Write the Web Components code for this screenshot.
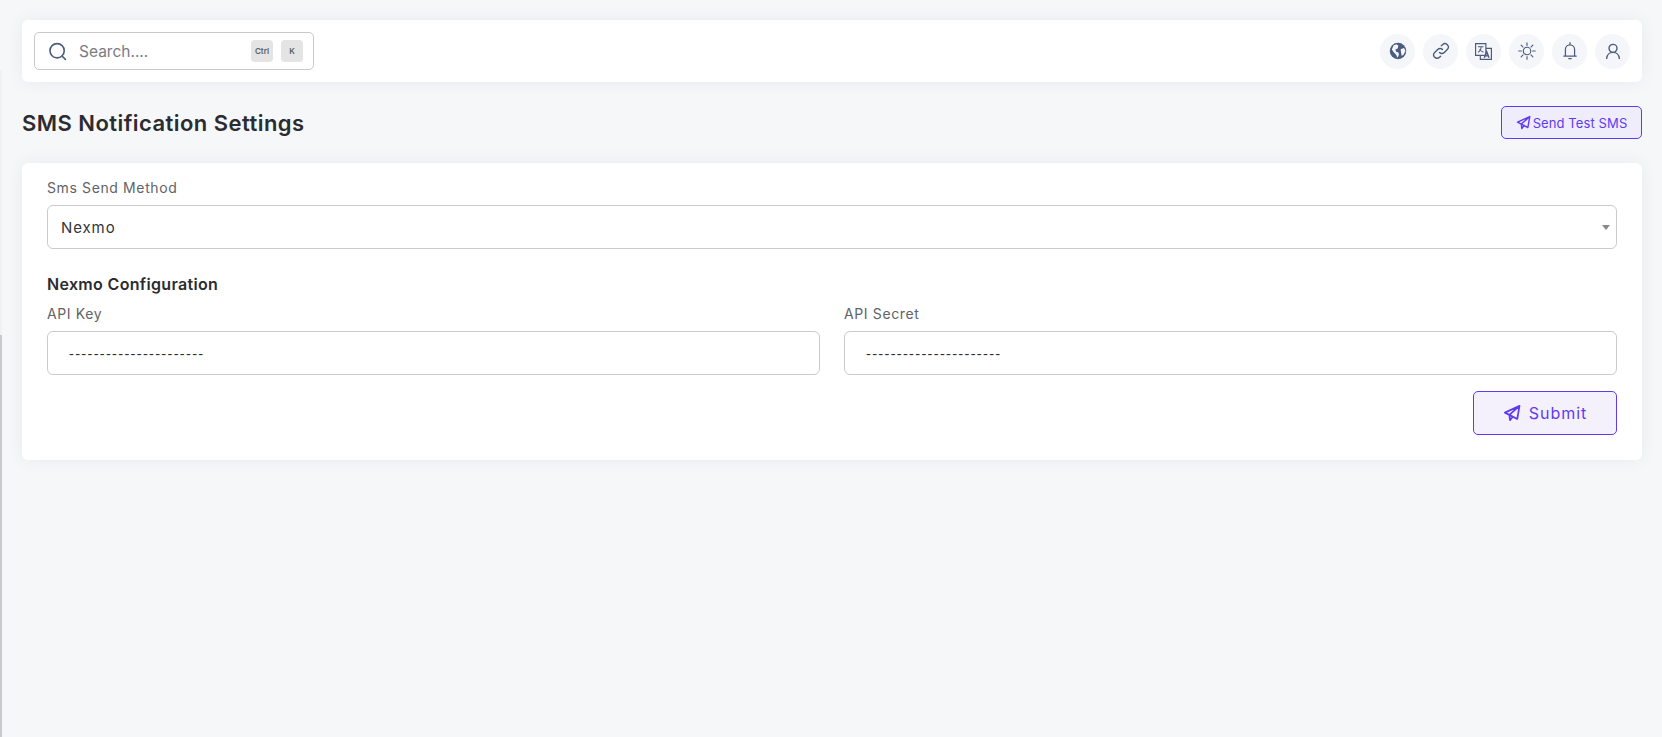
<!DOCTYPE html>
<html lang="en"><head><meta charset="utf-8"><title>SMS Notification Settings</title>
<style>
html,body{margin:0;height:100%}
body{background:#f6f7f9;font-family:Inter,"Open Sans",sans-serif;color:#2b2c30;overflow:hidden}
.edge-a{position:absolute;left:0;top:70px;width:2px;height:265px;background:#f0f1f3}
.edge-b{position:absolute;left:0;top:335px;width:2px;bottom:0;background:#c9cacd}
</style></head>
<body>
<div class="edge-a"></div><div class="edge-b"></div>
<sms-page>
  <top-bar></top-bar>
  <page-head title-text="SMS Notification Settings"><action-btn small>Send Test SMS</action-btn></page-head>
  <sms-card>
    <form-field label="Sms Send Method"><select-box>Nexmo</select-box></form-field>
    <h3-title>Nexmo Configuration</h3-title>
    <field-row>
      <form-field label="API Key"><text-box>----------------------</text-box></form-field>
      <form-field label="API Secret"><text-box>----------------------</text-box></form-field>
    </field-row>
    <form-foot><action-btn>Submit</action-btn></form-foot>
  </sms-card>
</sms-page>
<script>
const def=(name,html)=>{customElements.define(name,class extends HTMLElement{
  connectedCallback(){ if(this.shadowRoot) return; const r=this.attachShadow({mode:'open'}); r.innerHTML=typeof html==='function'?html(this):html; }
});};
const plane=s=>`<svg width="${s}" height="${s}" viewBox="0 0 24 24" fill="none" stroke="#5f3bf0" stroke-width="2.3" stroke-linejoin="round" stroke-linecap="round"><path d="M22 2.500 2.500 11.500l6 3L22 2.500Zm0 0L19 20l-10.500-5.500 .8 7 3.800-4.600"/></svg>`;
const ic={
globe:`<svg width="18" height="18" viewBox="0 0 24 24"><circle cx="12" cy="12" r="11" fill="#4b5c80"/><path d="M6 4.500l4-1.500 2.500 2-1 3.500-3 1.500 1 3 3 1 .8 3-2 4-2-4.500-3-3-2.500-3.500zM15.500 9.500l4.500-1.500 2 4-2.500 4.500-2.500 2-1-5z" fill="#f5f6f9"/></svg>`,
link:`<svg width="18" height="18" viewBox="0 0 24 24" fill="none" stroke="#4b5c80" stroke-width="1.800" stroke-linecap="round"><path d="M10 14a4.500 4.500 0 0 0 6.400 0l4-4a4.500 4.500 0 0 0-6.400-6.400l-1.500 1.500"/><path d="M14 10a4.500 4.500 0 0 0-6.400 0l-4 4a4.500 4.500 0 0 0 6.400 6.400l1.500-1.500"/></svg>`,
lang:`<svg width="19" height="19" viewBox="0 0 24 24" fill="none" stroke="#4b5c80" stroke-width="1.500"><path d="M2 2h13v15H2zM15 8h7v14H8v-5"/><path d="M5 6h7M9 6c0 3-2 6-4 7M7 9c1 2 3 3 5 4" stroke-width="1.300"/><path d="M13 20l3-8 3 8M14 17.500h4" stroke-width="1.800"/></svg>`,
sun:`<svg width="18" height="18" viewBox="0 0 24 24" fill="none" stroke="#4b5c80" stroke-width="1.500" stroke-linecap="round"><circle cx="12" cy="12" r="5"/><path d="M12 1v3.500M12 19.500V23M1 12h3.500M19.500 12H23M4.200 4.200l2.500 2.500M17.300 17.300l2.500 2.500M4.200 19.800l2.500-2.500M17.300 6.700l2.500-2.500"/></svg>`,
bell:`<svg width="20" height="20" viewBox="0 0 24 24" fill="none" stroke="#4b5c80" stroke-width="1.500" stroke-linejoin="round" stroke-linecap="round"><path d="M6.500 18V10a5.500 5.500 0 0 1 11 0v8M4.500 18h15M12 2v2.500M10.500 21h3"/></svg>`,
user:`<svg width="16" height="16" viewBox="0 0 24 24" fill="none" stroke="#4b5c80" stroke-width="2.100" stroke-linecap="round"><circle cx="12" cy="8" r="6"/><path d="M2.500 23c.5-5.500 4.500-9 9.500-9s9 3.500 9.500 9"/></svg>`};
def('sms-page',`<style>:host{display:flex;flex-direction:column;padding:20px 20px 0 22px}</style><slot></slot>`);
def('icon-circle',h=>`<style>:host{display:flex;width:35px;height:35px;border-radius:50%;background:#f5f6f9;align-items:center;justify-content:center}svg{display:block}</style>${ic[h.getAttribute('name')]}`);
def('key-cap',`<style>:host{display:flex;width:22px;height:22px;border-radius:4px;background:#e4e4e4;align-items:center;justify-content:center;font:600 8px/1 Inter,sans-serif;color:#5c5e63}</style><slot></slot>`);
def('top-bar',`<style>
:host{display:flex;height:62px;box-sizing:border-box;padding:0 12px;align-items:center;justify-content:space-between;background:#fff;border-radius:6px;box-shadow:0 0 18px rgba(30,35,60,.06)}
.search{display:flex;align-items:center;width:280px;height:38px;box-sizing:border-box;border:1px solid #c9c9c9;border-radius:5px;padding:0 10px 0 13px;gap:12px}
.search span{flex:1;font:400 15.500px Inter,sans-serif;color:#7a7c81;letter-spacing:0}
svg{display:block}.keys{display:flex;gap:8px}.icons{display:flex;gap:8px}
</style>
<div class="search"><svg width="19" height="19" viewBox="0 0 24 24" fill="none" stroke="#4b5c80" stroke-width="2" stroke-linecap="round"><circle cx="11.500" cy="11" r="9"/><path d="M18 18l4 4"/></svg><span>Search....</span><div class="keys"><key-cap>Ctrl</key-cap><key-cap>K</key-cap></div></div>
<div class="icons"><icon-circle name="globe"></icon-circle><icon-circle name="link"></icon-circle><icon-circle name="lang"></icon-circle><icon-circle name="sun"></icon-circle><icon-circle name="bell"></icon-circle><icon-circle name="user"></icon-circle></div>`);
def('page-head',h=>`<style>:host{display:flex;align-items:center;justify-content:space-between;margin:24px 0;height:33px}
h1{margin:0;font:600 22px/1 Inter,sans-serif;color:#2b2c30;letter-spacing:.45px}</style><h1>${h.getAttribute('title-text')}</h1><slot></slot>`);
def('action-btn',h=>{const s=h.hasAttribute('small');return `<style>
:host{display:inline-flex;align-items:center;justify-content:center;box-sizing:border-box;border:1px solid #5f3bf0;border-radius:5px;color:#5f3bf0;font-family:Inter,sans-serif;
${s?'width:141px;height:33px;gap:2px;font-size:13px;background:#efecfb;letter-spacing:.1px':'width:144px;height:44px;gap:8px;font-size:16px;background:#f4f1fd;letter-spacing:1px'}}
svg{display:block}</style>${plane(s?15:18)}<slot></slot>`});
def('sms-card',`<style>:host{display:block;background:#fff;border-radius:6px;padding:15px 25px 25px;box-shadow:0 0 18px rgba(30,35,60,.06)}</style><slot></slot>`);
def('form-field',h=>`<style>:host{display:block;min-width:0}label{display:block;font:400 14px/20px Inter,sans-serif;color:#616368;letter-spacing:.62px;margin-bottom:7px}</style><label>${h.getAttribute('label')}</label><slot></slot>`);
def('select-box',`<style>:host{display:flex;align-items:center;height:44px;box-sizing:border-box;border:1px solid #cbcbcb;border-radius:6px;padding:0 6px 0 13px;font:400 15px Inter,sans-serif;color:#33353a;letter-spacing:.9px;justify-content:space-between}
i{width:0;height:0;border-left:4px solid transparent;border-right:4px solid transparent;border-top:5px solid #888}</style><slot></slot><i></i>`);
def('text-box',`<style>:host{display:flex;align-items:center;height:44px;box-sizing:border-box;border:1px solid #cbcbcb;border-radius:6px;padding:0 21px;font:400 15px "Open Sans",sans-serif;color:#2b2c30;letter-spacing:1.33px}</style><slot></slot>`);
def('h3-title',`<style>:host{display:block;margin:24px 0 9px;font:600 16px/22px Inter,sans-serif;color:#2b2c30;letter-spacing:.33px}</style><slot></slot>`);
def('field-row',`<style>:host{display:grid;grid-template-columns:1fr 1fr;gap:24px}</style><slot></slot>`);
def('form-foot',`<style>:host{display:flex;justify-content:flex-end;margin-top:16px}</style><slot></slot>`);
</script>
</body></html>
